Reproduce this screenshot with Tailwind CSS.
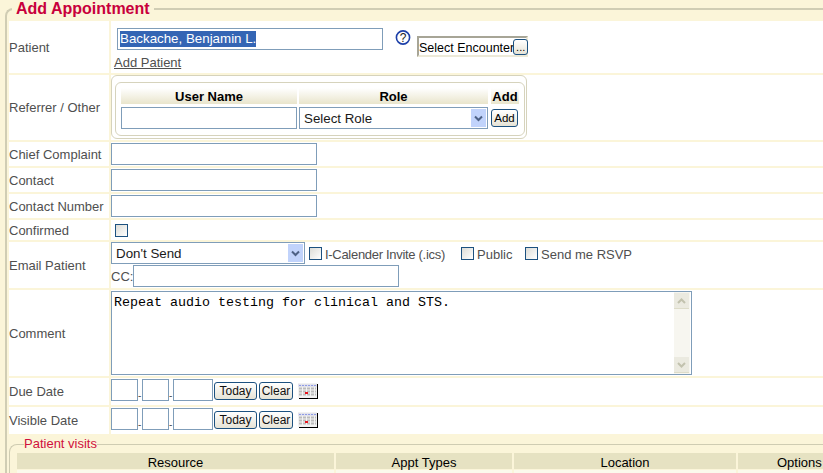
<!DOCTYPE html>
<html><head><meta charset="utf-8"><title>Add Appointment</title>
<script src="https://cdn.jsdelivr.net/npm/@tailwindcss/browser@4"></script></head>
<body class="w-[823px] h-[473px] overflow-hidden bg-[#fbf5d9] font-['Liberation_Sans',sans-serif] text-[13px] text-[#4f4f4f]">
<fieldset class="w-[818px] min-w-0 ml-[5px] border-l-2 border-t-2 border-[#d0cdb4] rounded-tl-[8px] pl-[2px] pt-[3px]">
<legend class="ml-[3px] px-[4px] text-[16px] leading-[18px] font-bold text-[#c8003c]">Add Appointment</legend>
<div class="flex flex-col gap-[2px]">
 <div class="flex gap-[2px] h-[52px]">
  <div class="w-[100px] bg-white flex items-center pt-[1px]">Patient</div>
  <div class="flex-1 bg-white relative pl-[3px]">
   <div class="flex items-start">
    <div class="mt-[7px] ml-[3px] w-[266px] h-[22px] border border-[#7f9db9] pl-[2px] pt-[2px]"><span class="block w-fit bg-[#3465b4] text-white text-[13.33px] leading-[16px]">Backache, Benjamin L.</span></div>
    <svg class="mt-[9px] ml-[12px]" width="16" height="16" viewBox="0 0 16 16"><circle cx="8" cy="7.5" r="6.6" fill="#fff" stroke="#1c3fa8" stroke-width="1.6"/><text x="8" y="11.7" text-anchor="middle" font-family="Liberation Sans" font-size="12" fill="#222">?</text></svg>
    <div class="mt-[15px] ml-[6px] w-[111px] h-[21px] border-2 border-[#a7a596] border-r-[#ece9d8] border-b-[#ece9d8] flex items-center text-[12.5px] whitespace-nowrap text-black"><span class="pt-[3px]">Select Encounter</span><button class="shrink-0 -ml-[1px] w-[15px] h-[16px] border border-[#1c5180] rounded-[3px] bg-gradient-to-b from-white to-[#e6e3d6] text-[11px] leading-[8px] text-black">...</button></div>
   </div>
   <div class="absolute left-[3px] top-[34px] text-[13px] underline leading-[16px]">Add Patient</div>
  </div>
 </div>
 <div class="flex gap-[2px] h-[65px]">
  <div class="w-[100px] bg-white flex items-center pt-[1px]">Referrer / Other</div>
  <div class="flex-1 bg-white">
   <div class="w-[416px] h-[64px] border border-[#d6d3bc] rounded-[6px] pt-[6px] pl-[3px]">
    <div class="h-[54px] w-[410px] border border-[#d6d3bc] rounded-[6px] pl-[5px] pt-[5px]">
     <div class="flex gap-[2px] h-[16px] text-[13px] leading-[18px] font-bold text-black text-center">
      <div class="w-[176px] bg-gradient-to-b from-white to-[#e9e5cc]">User Name</div>
      <div class="w-[189px] bg-gradient-to-b from-white to-[#e9e5cc]">Role</div>
      <div class="w-[28px] bg-gradient-to-b from-white to-[#e9e5cc] ml-[1px]">Add</div>
     </div>
     <div class="flex gap-[2px] mt-[3px] items-start">
      <input class="w-[176px] h-[22px] border border-[#7f9db9] bg-white">
      <div class="w-[189px] h-[22px] border border-[#7f9db9] flex items-center pl-[4px] text-[13.33px] text-[#1a1a1a]"><span class="flex-1 pt-[1px]">Select Role</span><span class="w-[15px] h-[18px] mr-[1px] bg-[#c1d3fb] flex items-center justify-center"><svg width="9" height="7" viewBox="0 0 9 7"><path d="M1 1.5 4.5 5 8 1.5" fill="none" stroke="#4d6185" stroke-width="2"/></svg></span></div>
      <button class="ml-[1px] mt-[2px] w-[27px] h-[18px] border border-[#1c5180] rounded-[3px] bg-gradient-to-b from-white to-[#e6e3d6] text-[11.5px] leading-[14px] text-black">Add</button>
     </div>
    </div>
   </div>
  </div>
 </div>
 <div class="flex gap-[2px] h-[24px]"><div class="w-[100px] bg-white flex items-center pt-[1px]">Chief Complaint</div><div class="flex-1 bg-white pt-[1px]"><input class="block w-[206px] h-[22px] border border-[#7f9db9]"></div></div>
 <div class="flex gap-[2px] h-[24px]"><div class="w-[100px] bg-white flex items-center pt-[1px]">Contact</div><div class="flex-1 bg-white pt-[1px]"><input class="block w-[206px] h-[22px] border border-[#7f9db9]"></div></div>
 <div class="flex gap-[2px] h-[24px]"><div class="w-[100px] bg-white flex items-center pt-[1px] whitespace-nowrap">Contact Number</div><div class="flex-1 bg-white pt-[1px]"><input class="block w-[206px] h-[22px] border border-[#7f9db9]"></div></div>
 <div class="flex gap-[2px] h-[20px]"><div class="w-[100px] bg-white flex items-center pt-[1px]">Confirmed</div><div class="flex-1 bg-white pl-[4px] pt-[4px]"><div class="w-[13px] h-[13px] border border-[#1c5180] bg-gradient-to-br from-[#dcdcd7] to-white"></div></div></div>
 <div class="flex gap-[2px] h-[46px]">
  <div class="w-[100px] bg-white flex items-center pt-[1px]">Email Patient</div>
  <div class="flex-1 bg-white flex flex-col gap-[1px]">
   <div class="flex items-center h-[22px]">
    <div class="w-[194px] h-[22px] border border-[#7f9db9] flex items-center pl-[4px] text-[13.33px] text-[#1a1a1a]"><span class="flex-1 pt-[1px]">Don't Send</span><span class="w-[15px] h-[18px] mr-[1px] bg-[#c1d3fb] flex items-center justify-center"><svg width="9" height="7" viewBox="0 0 9 7"><path d="M1 1.5 4.5 5 8 1.5" fill="none" stroke="#4d6185" stroke-width="2"/></svg></span></div>
    <div class="mt-[1px] ml-[4px] w-[13px] h-[13px] border border-[#1c5180] bg-gradient-to-br from-[#dcdcd7] to-white"></div><span class="ml-[3px] pt-[4px] w-[136px] tracking-[-0.3px] whitespace-nowrap">I-Calender Invite (.ics)</span>
    <div class="mt-[1px] w-[13px] h-[13px] border border-[#1c5180] bg-gradient-to-br from-[#dcdcd7] to-white"></div><span class="ml-[3px] pt-[4px] w-[48px]">Public</span>
    <div class="mt-[1px] w-[13px] h-[13px] border border-[#1c5180] bg-gradient-to-br from-[#dcdcd7] to-white"></div><span class="ml-[3px] pt-[4px]">Send me RSVP</span>
   </div>
   <div class="flex items-center h-[22px]"><span class="pt-[1px]">CC:</span><input class="w-[266px] h-[22px] border border-[#7f9db9]"></div>
  </div>
 </div>
 <div class="flex gap-[2px] h-[86px]">
  <div class="w-[100px] bg-white flex items-center pt-[1px]">Comment</div>
  <div class="flex-1 bg-white pt-[1px]">
   <div class="w-[581px] h-[84px] border border-[#7f9db9] flex justify-between">
    <div class="pl-[2px] pt-[3px] font-['Liberation_Mono',monospace] text-[13.33px] leading-[16px] text-black">Repeat audio testing for clinical and STS.</div>
    <div class="w-[16px] mr-[1px] bg-[#f7f6f0] flex flex-col justify-between py-[1px]">
     <div class="w-[15px] h-[16px] border-b border-[#dddcc9] bg-[#ebeae0] flex items-center justify-center"><svg width="9" height="6" viewBox="0 0 9 6"><path d="M1 5 4.5 1.5 8 5" fill="none" stroke="#c2c2ae" stroke-width="2"/></svg></div>
     <div class="w-[15px] h-[16px] border-b border-[#dddcc9] bg-[#ebeae0] flex items-center justify-center"><svg width="9" height="6" viewBox="0 0 9 6"><path d="M1 1 4.5 4.5 8 1" fill="none" stroke="#c2c2ae" stroke-width="2"/></svg></div>
    </div>
   </div>
  </div>
 </div>
 <div class="flex gap-[2px] h-[27px]">
  <div class="w-[100px] bg-white flex items-center pt-[1px]">Due Date</div>
  <div class="flex-1 bg-white flex items-start pt-[1px]">
   <input class="w-[27px] h-[22px] border border-[#7f9db9]"><span class="w-[4px] text-[10px] leading-[12px] mt-[11px]">-</span><input class="w-[27px] h-[22px] border border-[#7f9db9]"><span class="w-[4px] text-[10px] leading-[12px] mt-[11px]">-</span><input class="w-[40px] h-[22px] border border-[#7f9db9]">
   <button class="mt-[3px] ml-[1px] w-[43px] h-[18px] border border-[#1c5180] rounded-[3px] bg-gradient-to-b from-white to-[#e6e3d6] text-[12px] leading-[14px] text-[#111]">Today</button>
   <button class="mt-[3px] ml-[2px] w-[34px] h-[18px] border border-[#1c5180] rounded-[3px] bg-gradient-to-b from-white to-[#e6e3d6] text-[12px] leading-[14px] text-[#111]">Clear</button>
   <svg class="mt-[4px] ml-[5px]" width="20" height="16" viewBox="0 0 20 16"><rect x="1" y="1" width="19" height="15" fill="#000"/><rect x="0" y="0" width="19" height="15" fill="#f2f2f2"/><rect x="0" y="1" width="19" height="3" fill="#e2e2ea"/><path d="M1 2.5H18" stroke="#8f9ce6" stroke-dasharray="2 1"/><path d="M1 5.5H18M1 8.5H18M1 11.5H18" stroke="#bcbcbc" stroke-width="2" stroke-dasharray="3 1"/><rect x="7" y="9" width="3" height="2" fill="#e8141c"/></svg>
  </div>
 </div>
 <div class="flex gap-[2px] h-[27px]">
  <div class="w-[100px] bg-white flex items-center pt-[1px]">Visible Date</div>
  <div class="flex-1 bg-white flex items-start pt-[1px]">
   <input class="w-[27px] h-[22px] border border-[#7f9db9]"><span class="w-[4px] text-[10px] leading-[12px] mt-[11px]">-</span><input class="w-[27px] h-[22px] border border-[#7f9db9]"><span class="w-[4px] text-[10px] leading-[12px] mt-[11px]">-</span><input class="w-[40px] h-[22px] border border-[#7f9db9]">
   <button class="mt-[3px] ml-[1px] w-[43px] h-[18px] border border-[#1c5180] rounded-[3px] bg-gradient-to-b from-white to-[#e6e3d6] text-[12px] leading-[14px] text-[#111]">Today</button>
   <button class="mt-[3px] ml-[2px] w-[34px] h-[18px] border border-[#1c5180] rounded-[3px] bg-gradient-to-b from-white to-[#e6e3d6] text-[12px] leading-[14px] text-[#111]">Clear</button>
   <svg class="mt-[4px] ml-[5px]" width="20" height="16" viewBox="0 0 20 16"><rect x="1" y="1" width="19" height="15" fill="#000"/><rect x="0" y="0" width="19" height="15" fill="#f2f2f2"/><rect x="0" y="1" width="19" height="3" fill="#e2e2ea"/><path d="M1 2.5H18" stroke="#8f9ce6" stroke-dasharray="2 1"/><path d="M1 5.5H18M1 8.5H18M1 11.5H18" stroke="#bcbcbc" stroke-width="2" stroke-dasharray="3 1"/><rect x="7" y="9" width="3" height="2" fill="#e8141c"/></svg>
  </div>
 </div>
</div>
<fieldset class="min-w-0 mt-[2px] border-l border-t border-[#cfccb2] rounded-tl-[8px] pl-[7px] pt-[1px]">
 <legend class="ml-[7px] text-[13px] leading-[16px] text-[#d0103c]">Patient visits</legend>
 <div class="flex gap-[2px] h-[16px] text-[13px] leading-[19px] text-black text-center">
  <div class="w-[317px] bg-[#e6e2c2]">Resource</div>
  <div class="w-[176px] bg-[#e6e2c2]">Appt Types</div>
  <div class="w-[222px] bg-[#e6e2c2]">Location</div>
  <div class="flex-1 bg-[#e6e2c2] text-left pl-[39px]">Options</div>
 </div>
 <div class="flex gap-[2px] mt-[1px] h-[6px]">
  <div class="w-[317px] bg-[#fbf9ec]"></div><div class="w-[176px] bg-[#fbf9ec]"></div><div class="w-[222px] bg-[#fbf9ec]"></div><div class="flex-1 bg-[#fbf9ec]"></div>
 </div>
</fieldset>
</fieldset>
</body></html>
